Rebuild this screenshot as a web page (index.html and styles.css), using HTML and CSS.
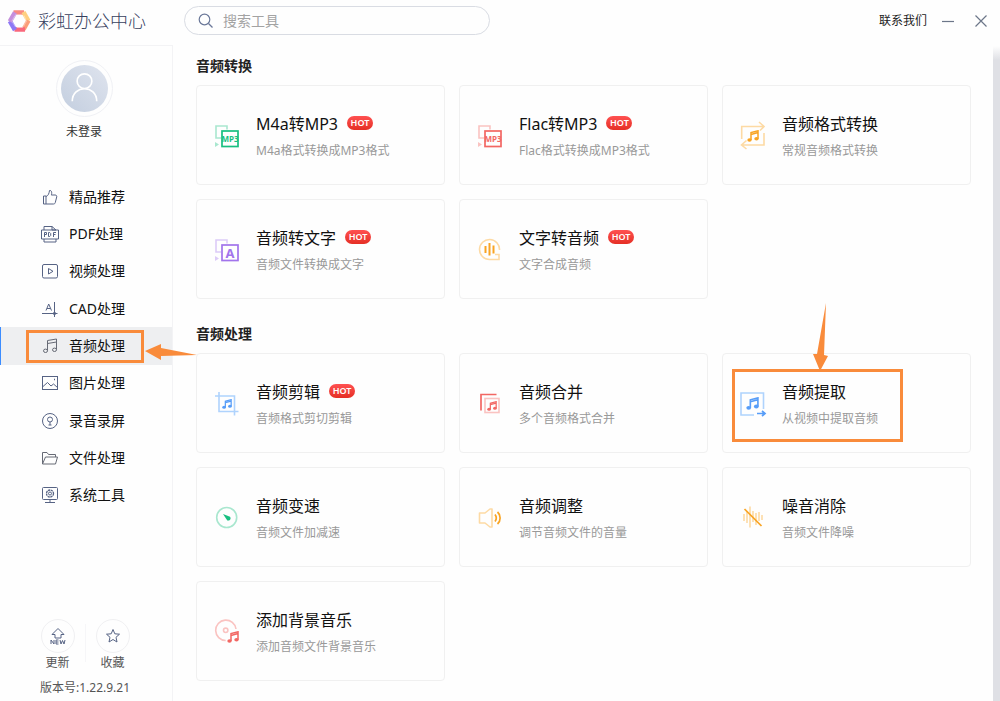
FILE: index.html
```html
<!DOCTYPE html>
<html lang="zh-CN">
<head>
<meta charset="utf-8">
<meta name="viewport" content="width=device-width, initial-scale=1">
<title>彩虹办公中心</title>
<link rel="stylesheet" href="styles.css">
</head>
<body>
<svg class="defs" aria-hidden="true">
  <defs>
    <linearGradient id="face" x1="0" y1="1" x2="1" y2="0"><stop offset="0" stop-color="#c3cedf"/><stop offset="1" stop-color="#dfe4ee"/></linearGradient>
    <symbol id="note" viewBox="0 0 12 12">
      <path d="M4 10V2.600L11 .8V8.800M4 4.400L11 2.600" fill="none" stroke="currentColor" stroke-width="1.500"/>
      <ellipse cx="2.500" cy="10" rx="2.200" ry="1.800" fill="currentColor"/>
      <ellipse cx="9.500" cy="8.800" rx="2.200" ry="1.800" fill="currentColor"/>
    </symbol>
  </defs>
</svg>
<div class="app">
  <aside class="sidebar">
    <div class="brand">
      <svg class="brand-logo" viewBox="0 0 24 24" fill="none" stroke-width="4.500" aria-hidden="true">
        <path d="M6.500 3.500H17" stroke="#f98a80"/>
        <path d="M16.500 3L21.500 12" stroke="#ffcf80"/>
        <path d="M21.500 11.500L16.500 20.500" stroke="#fb9d78"/>
        <path d="M18 20.500H7.500" stroke="#f9687c"/>
        <path d="M8 21L2.800 12" stroke="#8e78f5"/>
        <path d="M2.800 12.500L8 3.500" stroke="#c58fdc"/>
        <path d="M8 6L14.500 5.800M17 6.500L19.300 12M16.500 17.500L19.500 12M10 18.500H16M5 12.500L8.500 18M5 12L8 6.500" stroke="#fff" stroke-opacity=".55" stroke-width=".7"/>
      </svg>
      <h1 class="brand-name">彩虹办公中心</h1>
    </div>
    <div class="side-body">
      <a class="account" href="#login">
        <span class="avatar">
          <svg viewBox="0 0 48 48" fill="none" aria-hidden="true"><circle cx="24" cy="24" r="24" fill="url(#face)"/><circle cx="24" cy="16.500" r="7.500" stroke="#fff" stroke-width="1.700"/><path d="M11.500 37c0-17 25-17 25 0" stroke="#fff" stroke-width="1.700"/></svg>
        </span>
        <span>未登录</span>
      </a>
      <nav class="nav">
        <a class="nav-item" href="#featured"><svg viewBox="0 0 18 18" aria-hidden="true"><path d="M2.500 8H5v8H2.500zM5 8.500C7.500 7.500 8 5.500 8.500 2.500c2.500-.5 2.500 3 1.800 4.500H14c1.500 0 2 1 1.700 2l-1.400 5.500c-.3 1-.8 1.500-1.800 1.500H5"/></svg>精品推荐</a>
        <a class="nav-item" href="#pdf"><svg viewBox="0 0 18 18" aria-hidden="true"><path d="M3 5V1.500h8L15 5M11 1.500V5h4M3 14v3h12v-3M.5 5h17v9H.5z"/><path d="M3.500 12V7.500h2v2h-2M7.500 7.500v4h1.200l1-1v-2l-1-1zM12.500 12V7.500h2.500M12.500 9.500h2"/></svg>PDF处理</a>
        <a class="nav-item" href="#video"><svg viewBox="0 0 18 18" aria-hidden="true"><rect x="1.500" y="2.500" width="15" height="13.500" rx="1.500"/><path d="M7.500 6.500v5.500l4.500-2.700z"/></svg>视频处理</a>
        <a class="nav-item" href="#cad"><svg viewBox="0 0 18 18" aria-hidden="true"><path d="M1 13.500h15.500M13.500 2v15M5 10.500l2.700-6.500L10.500 10.500M6 8.500h3.500"/><circle cx="13.500" cy="13.500" r="1.200"/></svg>CAD处理</a>
        <a class="nav-item is-active" href="#audio" aria-current="page"><svg viewBox="0 0 18 18" class="icon-gray" aria-hidden="true"><path d="M6.500 13.500V3.500l9-1.500v10.500M6.500 6.500l9-1.500"/><ellipse cx="4.500" cy="13.800" rx="2" ry="1.700"/><ellipse cx="13.500" cy="12.800" rx="2" ry="1.700"/></svg>音频处理
          <svg class="marker-arrow-left" viewBox="0 0 52 18" aria-hidden="true"><path d="M0 8L16 1v4l36 7-36 1v4z"/></svg>
        </a>
        <a class="nav-item" href="#image"><svg viewBox="0 0 18 18" aria-hidden="true"><rect x="1.500" y="2.500" width="15" height="13"/><path d="M2 12.500l4.500-4L10 12l2.500-2 4 3.500"/><path d="M13 5.500h1" stroke-width="1.500"/></svg>图片处理</a>
        <a class="nav-item" href="#record"><svg viewBox="0 0 18 18" aria-hidden="true"><circle cx="9" cy="9" r="7.500"/><circle cx="9" cy="7.500" r="2.500"/><path d="M9 10v3M7.500 13h3"/></svg>录音录屏</a>
        <a class="nav-item" href="#file"><svg viewBox="0 0 18 18" class="icon-gray" aria-hidden="true"><path d="M1.500 15V3.500H6L7.500 5.500h7V8M1.500 15L4.500 8h12l-2 7z"/></svg>文件处理</a>
        <a class="nav-item" href="#system"><svg viewBox="0 0 18 18" aria-hidden="true"><rect x="1.500" y="1.500" width="15" height="12" rx="1"/><path d="M9 13.500v3M4 16.500h10"/><circle cx="9" cy="7.500" r="3.500" stroke-width="1.300" stroke-dasharray="2.200 .6"/><circle cx="9" cy="7.500" r="1.500"/></svg>系统工具</a>
      </nav>
      <footer class="side-foot">
        <div class="quick">
          <a class="quick-item" href="#update"><span class="quick-icon"><svg viewBox="0 0 18 18" aria-hidden="true"><path d="M6 11V7.500H3L9 1.500l6 6H12V11z"/><path d="M2 17v-4l3 4v-4M9.500 13H7v4h2.500M7 15h2.500M11 13l1 4 1.500-3.500L15 17l1-4"/></svg></span>更新</a>
          <a class="quick-item" href="#favorites"><span class="quick-icon"><svg viewBox="0 0 18 18" aria-hidden="true"><path d="M9 2.500l1.800 4.300 4.700.4-3.500 3.100 1 4.700L9 12.500 5 15l1-4.700-3.500-3.100 4.700-.4z"/></svg></span>收藏</a>
        </div>
        <p class="version">版本号:1.22.9.21</p>
      </footer>
    </div>
  </aside>

  <main class="main">
    <header class="topbar">
      <label class="search">
        <svg viewBox="0 0 16 16" aria-hidden="true"><circle cx="6.500" cy="6.500" r="5.300"/><path d="M10.500 10.500l4 4"/></svg>
        <input type="search" placeholder="搜索工具" aria-label="搜索工具">
      </label>
      <div class="window-tools">
        <a href="#contact">联系我们</a>
        <button type="button" aria-label="最小化"><svg viewBox="0 0 14 14" aria-hidden="true"><path d="M1 7.500h12"/></svg></button>
        <button type="button" aria-label="关闭"><svg viewBox="0 0 14 14" aria-hidden="true"><path d="M1.500 1.500l11 11M12.500 1.500l-11 11"/></svg></button>
      </div>
    </header>
    <div class="content">
      <section class="group">
        <h2>音频转换</h2>
        <div class="cards">
          <a class="card" href="#m4a">
            <svg class="card-icon green" viewBox="0 0 28 30" aria-hidden="true"><path class="soft" d="M7 18H2V6h11v3.500"/><path class="soft-fill" d="M1 22l4 2.500-4 2.500z"/><rect class="line" x="8" y="11" width="16" height="15.500"/><text x="16" y="21.500" class="mp3">MP3</text></svg>
            <div><h3>M4a转MP3 <span class="hot">HOT</span></h3><p>M4a格式转换成MP3格式</p></div>
          </a>
          <a class="card" href="#flac">
            <svg class="card-icon red" viewBox="0 0 28 30" aria-hidden="true"><path class="soft" d="M7 18H2V6h11v3.500"/><path class="soft-fill" d="M1 22l4 2.500-4 2.500z"/><rect class="line" x="8" y="11" width="16" height="15.500"/><text x="16" y="21.500" class="mp3">MP3</text></svg>
            <div><h3>Flac转MP3 <span class="hot">HOT</span></h3><p>Flac格式转换成MP3格式</p></div>
          </a>
          <a class="card" href="#format">
            <svg class="card-icon orange" viewBox="0 0 28 30" aria-hidden="true"><path class="soft" d="M1.700 19V6.500H24M19 2l5 4.500-4 4M24 13v12H1.500M6.500 20.500L1.500 25l5 4"/><use href="#note" x="7" y="10" width="12" height="12"/></svg>
            <div><h3>音频格式转换</h3><p>常规音频格式转换</p></div>
          </a>
          <a class="card" href="#speech-to-text">
            <svg class="card-icon purple" viewBox="0 0 28 30" aria-hidden="true"><path class="soft" d="M7 18H2V6h11v3.500"/><path class="soft-fill" d="M1 22l4 2.500-4 2.500z"/><rect class="line" x="8" y="11" width="16" height="15.500"/><text x="16" y="23.500" class="letter">A</text></svg>
            <div><h3>音频转文字 <span class="hot">HOT</span></h3><p>音频文件转换成文字</p></div>
          </a>
          <a class="card" href="#text-to-speech">
            <svg class="card-icon orange" viewBox="0 0 28 30" aria-hidden="true"><path class="soft" d="M22.500 16a10 10 0 1 0-10 9.500H22V20.500H18"/><path class="line wide" d="M8.500 12v7M12.500 9v12.500M16.500 11.500v8"/></svg>
            <div><h3>文字转音频 <span class="hot">HOT</span></h3><p>文字合成音频</p></div>
          </a>
        </div>
      </section>

      <section class="group">
        <h2>音频处理</h2>
        <div class="cards">
          <a class="card" href="#cut">
            <svg class="card-icon blue" viewBox="0 0 28 30" aria-hidden="true"><path class="soft" d="M1 8h19.500v19.500M5 4v19.500h19.500"/><use href="#note" x="8" y="11" width="10" height="10"/></svg>
            <div><h3>音频剪辑 <span class="hot">HOT</span></h3><p>音频格式剪切剪辑</p></div>
          </a>
          <a class="card" href="#merge">
            <svg class="card-icon red" viewBox="0 0 28 30" aria-hidden="true"><path class="line" d="M4 22.500V6.500h15.500"/><rect class="soft" x="8" y="10.500" width="14" height="14"/><use href="#note" x="10" y="13" width="10" height="10"/></svg>
            <div><h3>音频合并</h3><p>多个音频格式合并</p></div>
          </a>
          <a class="card" href="#extract">
            <svg class="card-icon blue" viewBox="0 0 28 30" aria-hidden="true"><path class="soft" d="M14 27H1V5h22.500v16"/><path class="line" d="M17 25.500h7.500M22 23l3 2.500-3 2.500"/><use href="#note" x="6" y="9" width="13" height="13"/></svg>
            <div><h3>音频提取</h3><p>从视频中提取音频</p></div>
            <span class="marker-frame"></span>
            <svg class="marker-arrow-down" viewBox="0 0 16 68" aria-hidden="true"><path d="M14 0L12 52l4 1-8 15L1 51h4z"/></svg>
          </a>
          <a class="card" href="#speed">
            <svg class="card-icon green" viewBox="0 0 28 30" aria-hidden="true"><circle class="soft" cx="12.700" cy="15.500" r="10"/><path class="fill" d="M9 12l7 2.700c1.500 2-.2 4.500-2.700 3.800z"/></svg>
            <div><h3>音频变速</h3><p>音频文件加减速</p></div>
          </a>
          <a class="card" href="#adjust">
            <svg class="card-icon orange" viewBox="0 0 28 30" aria-hidden="true"><path class="soft" stroke-linejoin="round" d="M2.500 11H8l5-4h2v18h-2l-5-4H2.500z"/><path class="line" d="M18 12.500c1.500 2 1.500 5 0 7M20.500 10c3.500 3 3.500 9 0 12"/></svg>
            <div><h3>音频调整</h3><p>调节音频文件的音量</p></div>
          </a>
          <a class="card" href="#denoise">
            <svg class="card-icon orange" viewBox="0 0 28 30" aria-hidden="true"><path class="soft" d="M4 12v7M7 9v12M10 4.500v21M13 9v11M16 11v12M19 10v9M22 13v5"/><path class="line" d="M4.500 7l17 17"/></svg>
            <div><h3>噪音消除</h3><p>音频文件降噪</p></div>
          </a>
          <a class="card" href="#background">
            <svg class="card-icon red" viewBox="0 0 28 30" aria-hidden="true"><path class="soft" d="M22 13A10.200 10.200 0 1 0 11.700 24.500"/><circle class="soft" cx="11.700" cy="14.300" r="2.200"/><use href="#note" x="13" y="15" width="12" height="12"/></svg>
            <div><h3>添加背景音乐</h3><p>添加音频文件背景音乐</p></div>
          </a>
        </div>
      </section>
    </div>
    <div class="edge"></div>
  </main>
</div>
</body>
</html>
```

FILE: styles.css
```css
* { box-sizing: border-box; }

body {
  margin: 0;
  background: #fefefe;
  color: #111;
  font: 14px/20px "Noto Sans", "Noto Sans CJK SC", sans-serif;
}

h1, h2, h3, p { margin: 0; font-weight: 400; }
a { color: inherit; text-decoration: none; }
svg { display: block; flex: none; }

.defs { position: absolute; width: 0; height: 0; }

.app {
  display: grid;
  grid-template-columns: 173px 1fr;
  min-height: 100vh;
}

/* Sidebar */
.sidebar { display: flex; flex-direction: column; }

.brand {
  display: flex;
  align-items: center;
  gap: 7px;
  height: 46px;
  padding: 0 0 4px 7px;
  border-bottom: 1px solid #f3f3f5;
}
.brand-logo { width: 24px; height: 24px; }
.brand-name { color: #37415e; font-size: 18px; line-height: 24px; font-weight: 300; white-space: nowrap; }

.side-body {
  flex: 1;
  display: flex;
  flex-direction: column;
  border-right: 1px solid #f3f3f5;
}

.account {
  display: flex;
  flex-direction: column;
  align-items: center;
  gap: 5px;
  padding: 14px 4px 0 0;
  color: #333;
  font-size: 12px;
}
.avatar {
  padding: 4px;
  border: 1px solid #f0f1f5;
  border-radius: 50%;
}
.avatar svg { width: 47px; height: 47px; }

.nav {
  display: flex;
  flex-direction: column;
  min-height: 336px;
  margin-top: 36px;
}
.nav-item {
  flex: 1;
  position: relative;
  display: flex;
  align-items: center;
  gap: 10px;
  padding-left: 40px;
  border-left: 1px solid transparent;
}
.nav-item svg, .quick-icon svg {
  width: 18px;
  height: 18px;
  fill: none;
  stroke: #566384;
  stroke-width: 1;
}
.nav-item .icon-gray { stroke: #666a75; }
.nav-item.is-active { background: #eeeff1; border-left-color: #3b8cff; }
.nav-item.is-active::after {
  content: "";
  position: absolute;
  inset: 3px 28px 2px 25px;
  border: 3px solid #f98b3b;
}
.nav-item .marker-arrow-left {
  position: absolute;
  z-index: 1;
  left: 144px;
  top: 16px;
  width: 52px;
  height: 18px;
  fill: #f98b3b;
  stroke: none;
}

.side-foot {
  margin-top: auto;
  padding: 0 2px 3px 0;
  color: #555;
  font-size: 12px;
  text-align: center;
}
.quick { display: flex; justify-content: center; gap: 21px; }
.quick-item { position: relative; display: flex; flex-direction: column; align-items: center; }
.quick-item + .quick-item::before {
  content: "";
  position: absolute;
  left: -11px;
  top: 5px;
  height: 38px;
  border-left: 1px solid #f6f6f8;
}
.quick-icon {
  display: grid;
  place-items: center;
  width: 34px;
  height: 34px;
  border: 1px solid #f0f0f2;
  border-radius: 50%;
}
.version { margin-top: 5px; }

/* Main area */
.main { position: relative; min-width: 0; }

.topbar {
  display: flex;
  align-items: center;
  justify-content: space-between;
  padding: 6px 12px 0 11px;
}
.search {
  display: flex;
  align-items: center;
  gap: 9px;
  width: 306px;
  height: 29px;
  padding: 0 13px;
  border: 1px solid #d9dce3;
  border-radius: 15px;
}
.search svg { width: 16px; height: 16px; fill: none; stroke: #6b7899; stroke-width: 1.2; }
.search input {
  flex: 1;
  min-width: 0;
  padding: 0;
  border: 0;
  outline: 0;
  background: none;
  color: #333;
  font: inherit;
}
.search input::placeholder { color: #a3a3a3; opacity: 1; }

.window-tools { display: flex; align-items: center; color: #222; font-size: 12px; }
.window-tools button {
  margin-left: 14px;
  padding: 0;
  border: 0;
  background: none;
  cursor: pointer;
}
.window-tools button + button { margin-left: 19px; }
.window-tools svg { width: 14px; height: 14px; fill: none; stroke: #6c7689; stroke-width: 1.2; }

.content { padding: 21px 29px 19px 23px; }
.group + .group { margin-top: 25px; }
.group h2 { margin-bottom: 9px; color: #222; font-size: 14px; font-weight: 700; }

.cards {
  display: grid;
  grid-template-columns: repeat(3, 1fr);
  gap: 14px;
}
.card {
  position: relative;
  display: flex;
  align-items: center;
  gap: 14px;
  min-height: 100px;
  padding: 0 17px;
  border: 1px solid #f0f0f0;
  border-radius: 4px;
}
.card div { padding-top: 2px; }
.card h3 {
  display: flex;
  align-items: center;
  gap: 9px;
  font-size: 16px;
  line-height: 26px;
}
.card p { margin-top: 4px; color: #999; font-size: 12px; }

.hot {
  width: 26px;
  height: 14px;
  margin-bottom: 2px;
  border-radius: 7px;
  background: linear-gradient(#ff5151, #e52f25);
  color: #fff;
  font: 600 9px/14px "Noto Sans", sans-serif;
  text-align: center;
}

/* Card icons */
.card-icon { width: 28px; height: 30px; color: var(--tone); }
.card-icon .soft { fill: none; stroke: var(--tint); stroke-width: 1.6; }
.card-icon .soft-fill { fill: var(--tint); }
.card-icon .line { fill: none; stroke: var(--tone); stroke-width: 1.7; }
.card-icon .wide { stroke-width: 2; }
.card-icon .fill { fill: var(--tone); }
.card-icon text { fill: var(--tone); font-family: "Noto Sans", sans-serif; font-weight: 700; text-anchor: middle; }
.card-icon .mp3 { font-size: 8px; }
.card-icon .letter { font-size: 13px; }
.green { --tone: #18bf80; --tint: #a9e7cf; }
.red { --tone: #f26763; --tint: #fac3c1; }
.orange { --tone: #f9a423; --tint: #fddaa4; }
.purple { --tone: #a274ec; --tint: #dccbf8; }
.blue { --tone: #579df8; --tint: #afd3fd; }

.marker-frame {
  position: absolute;
  left: 9px;
  top: 15px;
  width: 171px;
  height: 73px;
  border: 3px solid #f98b3b;
}
.marker-arrow-down {
  position: absolute;
  left: 89px;
  top: -51px;
  width: 16px;
  height: 68px;
  fill: #f98b3b;
}

.edge {
  position: absolute;
  top: 46px;
  right: 0;
  bottom: 0;
  width: 7px;
  background: linear-gradient(#fefefe, #dfe0e5 14px);
}
```
